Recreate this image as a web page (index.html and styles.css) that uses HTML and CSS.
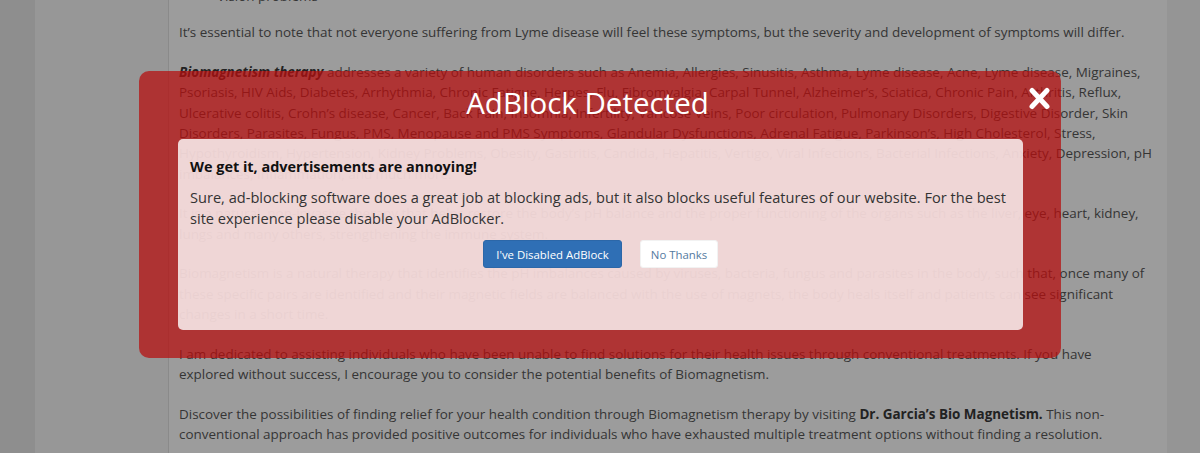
FILE: index.html
```html
<!DOCTYPE html>
<html lang="en">
<head>
<meta charset="utf-8">
<title>Biomagnetism</title>
<link rel="stylesheet" href="styles.css">
</head>
<body>
<div class="gutter"></div>
<div class="site">
  <aside class="side"></aside>
  <main class="main">
    <ul class="list">
      <li>Vision problems</li>
    </ul>
    <p>It’s essential to note that not everyone suffering from Lyme disease will feel these symptoms, but the severity and development of symptoms will differ.</p>
    <p><strong><em>Biomagnetism therapy</em></strong> addresses a variety of human disorders such as Anemia, Allergies, Sinusitis, Asthma, Lyme disease, Acne, Lyme disease, Migraines, Psoriasis, HIV Aids, Diabetes, Arrhythmia, Chronic Fatigue, Herpes, Flu, Fibromyalgia, Carpal Tunnel, Alzheimer’s, Sciatica, Chronic Pain, Arthritis, Reflux, Ulcerative colitis, Crohn’s disease, Cancer, Back Pain, Insomnia, Infertility, Varicose Veins, Poor circulation, Pulmonary Disorders, Digestive Disorder, Skin Disorders, Parasites, Fungus, PMS, Menopause and PMS Symptoms, Glandular Dysfunctions, Adrenal Fatigue, Parkinson’s, High Cholesterol, Stress, Hypothyroidism, Hypertension, Kidney Problems, Obesity, Gastritis, Candida, Hepatitis, Vertigo, Viral Infections, Bacterial Infections, Anxiety, Depression, pH imbalances, Inflammation, and much more.</p>
    <p>It is a natural, non-invasive therapy that helps restore the body’s pH balance and the proper functioning of the organs such as the liver, eye, heart, kidney, lungs and many others, strengthening the immune system.</p>
    <p>Biomagnetism is a natural therapy that identifies the pH imbalances caused by viruses, bacteria, fungus and parasites in the body, such that, once many of these specific pairs are identified and their magnetic fields are balanced with the use of magnets, the body heals itself and patients can see significant changes in a short time.</p>
    <p>I am dedicated to assisting individuals who have been unable to find solutions for their health issues through conventional treatments. If you have<br>explored without success, I encourage you to consider the potential benefits of Biomagnetism.</p>
    <p>Discover the possibilities of finding relief for your health condition through Biomagnetism therapy by visiting <strong class="brand">Dr. Garcia’s Bio Magnetism.</strong> This non-conventional approach has provided positive outcomes for individuals who have exhausted multiple treatment options without finding a resolution.</p>
  </main>
</div>

<div class="modal" role="dialog" aria-labelledby="adb-title">
  <div class="modal-head">
    <h2 id="adb-title" class="modal-title">AdBlock Detected</h2>
    <button class="close" aria-label="Close">
      <svg width="25" height="23" viewBox="0 0 25 23" aria-hidden="true">
        <path d="M5 3.5 L20 19.5 M20 3.5 L5 19.5" stroke="#fff" stroke-width="5" stroke-linecap="round" fill="none"/>
      </svg>
    </button>
  </div>
  <div class="modal-body">
    <h3 class="modal-sub">We get it, advertisements are annoying!</h3>
    <p class="modal-text">Sure, ad-blocking software does a great job at blocking ads, but it also blocks useful features of our website. For the best site experience please disable your AdBlocker.</p>
    <div class="actions">
      <button class="btn btn-primary">I've Disabled AdBlock</button>
      <button class="btn btn-plain">No Thanks</button>
    </div>
  </div>
</div>
</body>
</html>
```

FILE: styles.css
```css
html, body {
  margin: 0;
  padding: 0;
}

body {
  width: 1200px;
  height: 453px;
  overflow: hidden;
  display: flex;
  background: #959595;
  font-family: "Open Sans", "Noto Sans", sans-serif;
  position: relative;
}

.gutter {
  width: 35px;
  flex: none;
  background: #8e8e8e;
}

.site {
  width: 1132px;
  flex: none;
  display: flex;
  background: #979797;
}

.side {
  width: 133px;
  flex: none;
}

.main {
  flex: 1;
  background: #9c9c9c;
  border-left: 1px solid #8a8a8a;
  padding: 0 0 0 10px;
  color: #353535;
  font-size: 13.45px;
  line-height: 20.3px;
}

.list {
  margin: -14px 0 16px;
  padding-left: 38px;
}

.main p {
  margin: 0 0 19.5px;
}

.main strong {
  color: #222;
}

.brand {
  color: #111;
}

/* Modal */
.modal {
  position: absolute;
  left: 139px;
  top: 71px;
  width: 922px;
  height: 287px;
  box-sizing: border-box;
  border-radius: 10px;
  background: rgba(183, 14, 14, 0.73);
  display: flex;
  flex-direction: column;
}

.modal-head {
  height: 68px;
  box-sizing: border-box;
  padding: 0 25px 4px 0;
  display: flex;
  align-items: center;
  justify-content: center;
  position: relative;
}

.modal-title {
  margin: 0;
  font-weight: 400;
  font-size: 29.5px;
  line-height: 1;
  color: #fff;
}

.close {
  position: absolute;
  right: 9px;
  top: 16px;
  width: 25px;
  height: 23px;
  padding: 0;
  border: 0;
  background: none;
  display: block;
}

.close svg {
  display: block;
}

.modal-body {
  margin: 0 38px 0 39px;
  height: 191px;
  box-sizing: border-box;
  padding: 17px 6px 17px 12px;
  border-radius: 5px;
  background: rgba(255, 255, 255, 0.8);
}

.modal-sub {
  margin: 0 0 10px;
  font-size: 14.45px;
  line-height: 21px;
  font-weight: 700;
  color: #111;
}

.modal-text {
  margin: 0 0 11px;
  font-size: 14.6px;
  line-height: 21px;
  color: #333;
}

.actions {
  display: flex;
  justify-content: center;
  gap: 18px;
  padding-right: 6px;
}

.btn {
  height: 28px;
  box-sizing: border-box;
  padding: 0 4px;
  border-radius: 3px;
  font-family: "Open Sans", "Noto Sans", sans-serif;
  font-size: 11.4px;
  white-space: nowrap;
  border: 1px solid transparent;
}

.btn-primary {
  width: 139px;
  background: #2f6fb5;
  border-color: #2c67a8;
  color: #fff;
}

.btn-plain {
  width: 78px;
  background: #fff;
  border-color: #f2f2f2;
  color: #557a9f;
}
```
